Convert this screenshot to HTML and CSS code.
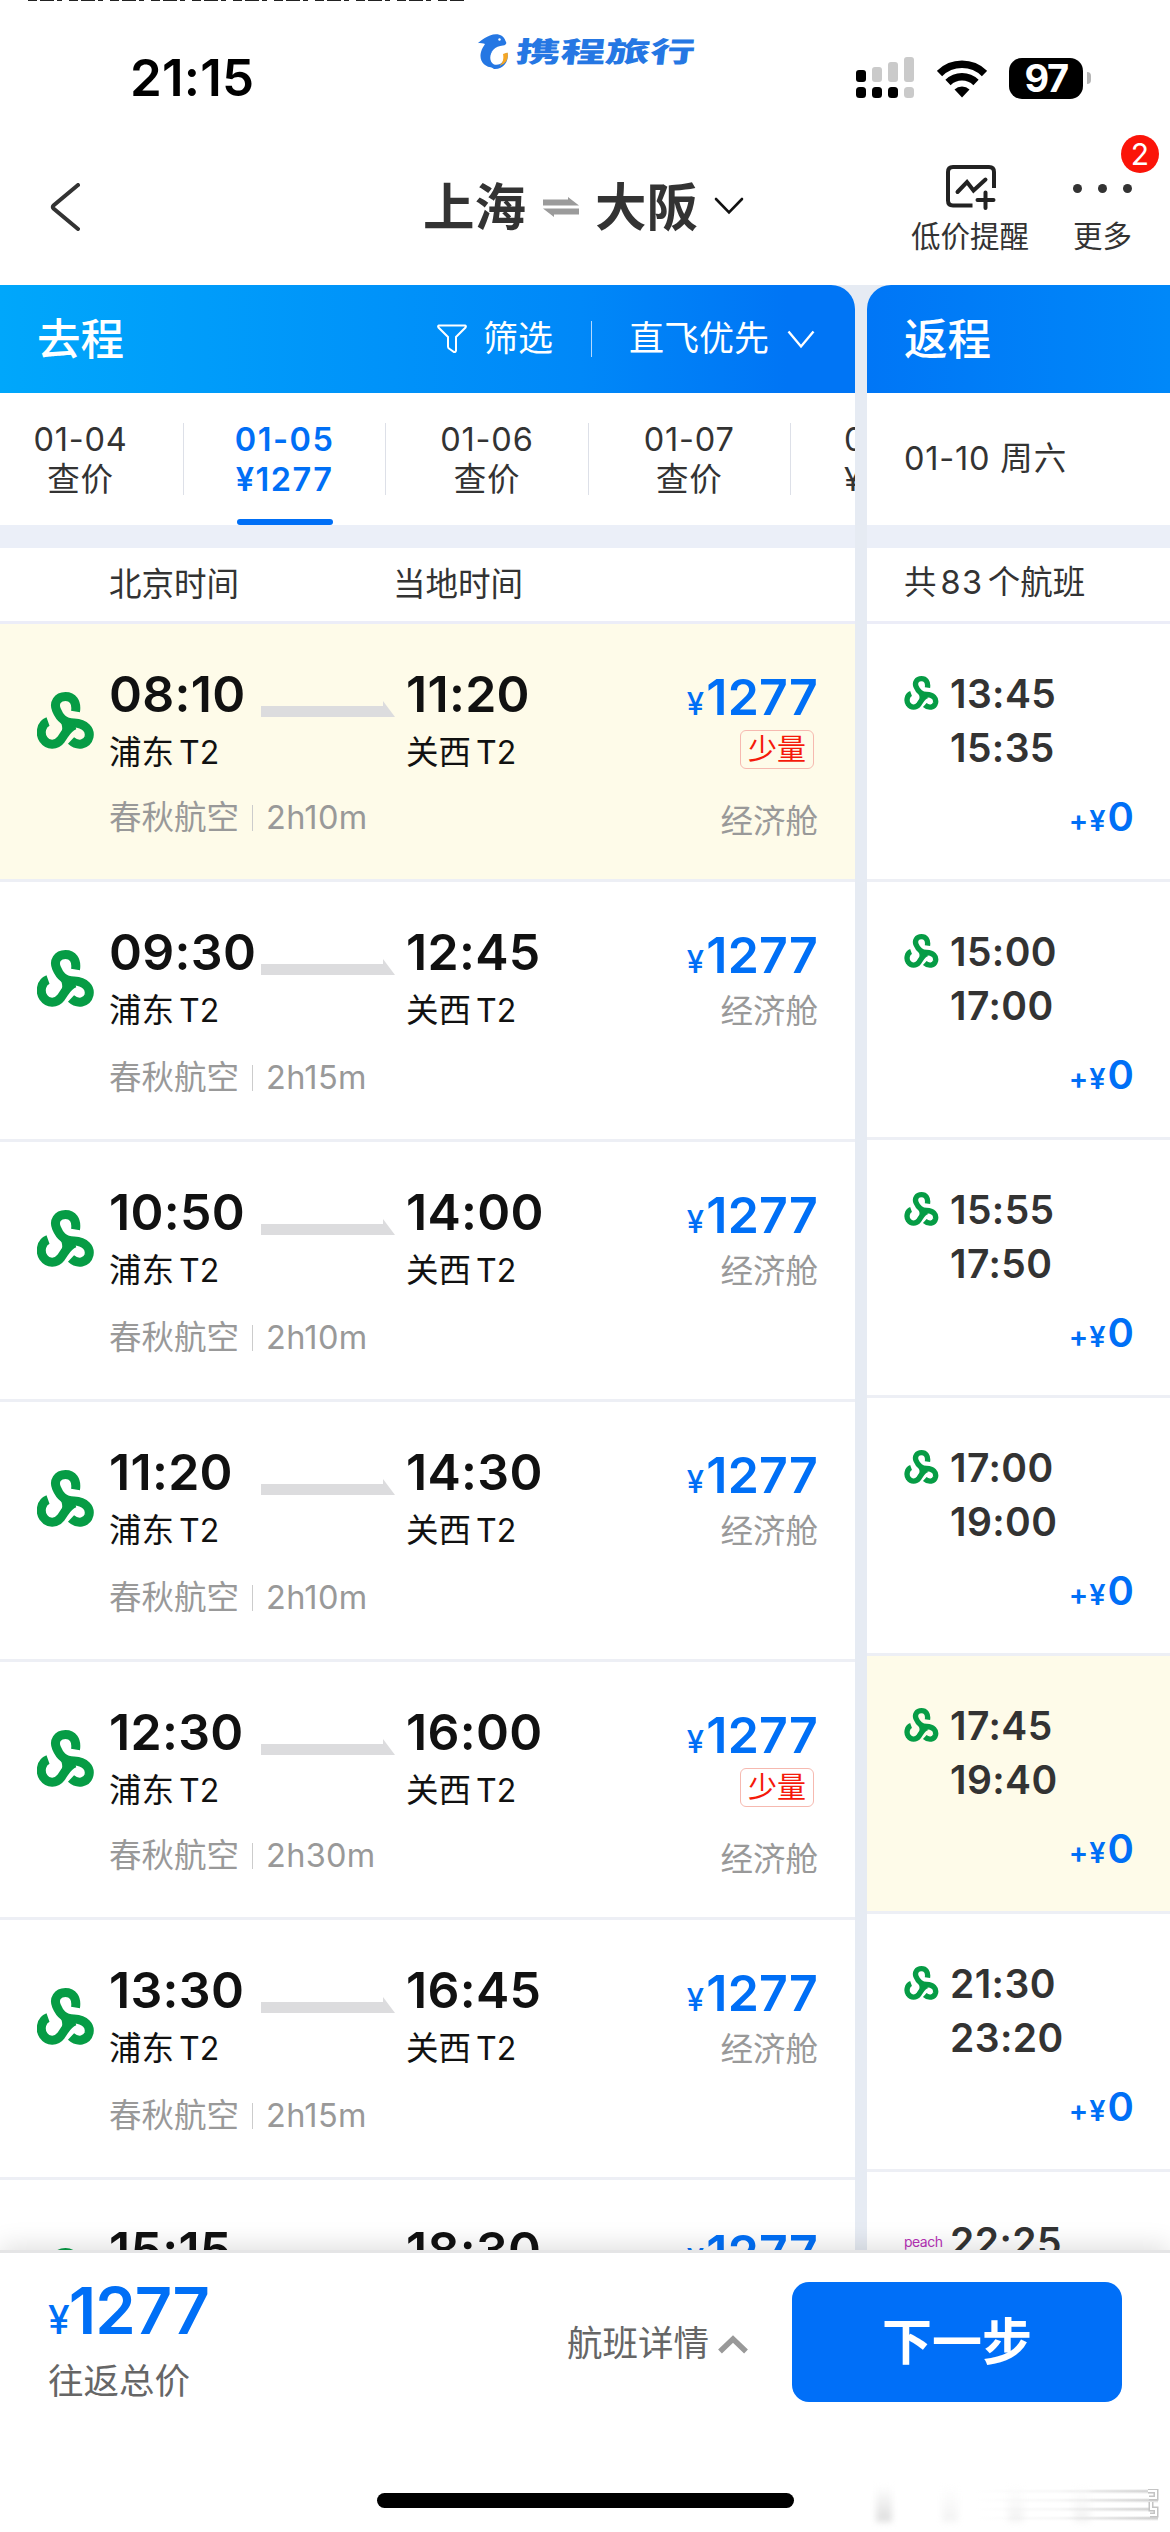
FILE: index.html
```html
<!DOCTYPE html>
<html lang="zh-CN">
<head>
<meta charset="utf-8">
<title>上海 - 大阪 航班</title>
<link rel="stylesheet" href="styles.css">
</head>
<body>
<svg class="defs" width="0" height="0">
  <symbol id="spring" viewBox="0 0 57 57">
    <g fill="none" stroke="#069c45" stroke-width="9">
      <path d="M38.500 19.500C40 10 35.500 4.500 28.500 4.500C20.500 4.500 16.500 11 19.500 18C22 24 26 31 37 31C48.500 31.500 53.500 38 52 45C50 53 40.500 54.500 34 48.500"/>
      <path d="M11 29.500C4 32 2.500 42 6.500 47.500C11 54 19.500 53.500 24 47.500C29 40.500 31 35 38 33"/>
    </g>
    <path d="M18 20L24 23L38 30L32 39L24.500 42C26 37 25.500 32 21.500 25Z" fill="#069c45"/>
  </symbol>
  <symbol id="arrow" viewBox="0 0 134 16">
    <path d="M0 5H122V0L134 16H0Z" fill="#dcdcde"/>
  </symbol>
</svg>
<div class="screen">
  <div class="sliver"></div>
  <header class="status">
    <div class="clock">21:15</div>
    <div class="brand">
      <svg width="32" height="36" viewBox="0 0 32 36">
        <path d="M1 9C6 5 9 3 13 1.500C20-1.500 27 1 28.500 7C30 9 29.500 11 26 11.500C22 12 19 13 16 16C11 21 11 29 18 33.500C8 34.500 1.500 27 4 18C5 14 7 12 8 10C6 9 4 9.500 1 9Z" fill="#2577e3"/>
        <path d="M17 15C12 20 12 28 17 30.500C24 32 28 27 27.500 20L30.500 19C32 28 26 35.500 17 35C9 31 9 21 17 15Z" fill="#2577e3"/>
        <path d="M26 20L30.500 18.500C32 25 29 30 22 32C26 29 27 25 26 20Z" fill="#f5a623"/>
        <circle cx="22.500" cy="5.500" r="1.200" fill="#fff"/>
      </svg>
      <div class="brand-box"><span class="brand-name">携程旅行</span></div>
    </div>
    <div class="indicators">
      <svg width="59" height="42" viewBox="0 0 59 42">
        <g fill="#000"><rect y="13" width="10" height="12" rx="3"/><rect y="30" width="10" height="11" rx="3.500"/><rect x="16" y="30" width="10" height="11" rx="3.500"/><rect x="32" y="30" width="10" height="11" rx="3.500"/></g>
        <g fill="#cacaca"><rect x="16" y="10" width="10" height="15" rx="3"/><rect x="32" y="5" width="10" height="20" rx="3"/><rect x="48" width="10" height="25" rx="3"/><rect x="48" y="30" width="10" height="11" rx="3.500"/></g>
      </svg>
      <svg width="50" height="38" viewBox="0 0 50 38">
        <g fill="none" stroke="#000" stroke-width="7.500"><path d="M2.500 13.500A32 32 0 0 1 47.500 13.500"/><path d="M11 22.500A20 20 0 0 1 39 22.500"/></g>
        <path d="M17.500 29.500A11 11 0 0 1 32.500 29.500L25 37.500Z"/>
      </svg>
      <div class="battery"><span class="level">97</span><span class="nub"></span></div>
    </div>
  </header>

  <nav class="nav">
    <svg class="back" width="30" height="48" viewBox="0 0 30 48"><path d="M28 2L3.500 22.500Q2 24 3.500 25.500L28 46" fill="none" stroke="#333" stroke-width="4" stroke-linecap="round"/></svg>
    <div class="route">
      <span>上海</span>
      <svg width="36" height="20" viewBox="0 0 36 20"><path d="M0 2.500H25V0L36 8.500H0Z M36 17.500H11V20L0 11.500H36Z" fill="#9b9b9b"/></svg>
      <span>大阪</span>
      <svg class="route-caret" width="30" height="18" viewBox="0 0 30 18"><path d="M2 2L15 15.500L28 2" fill="none" stroke="#111" stroke-width="2.600" stroke-linecap="round"/></svg>
    </div>
    <div class="tool tool-alert">
      <svg width="50" height="46" viewBox="0 0 50 46"><g fill="none" stroke="#222" stroke-width="4"><path d="M26.500 40.500H7Q2 40.500 2 35.500V7Q2 2 7 2H43Q48 2 48 7V23"/><path d="M11.500 27L21 17L27.500 25.500L39.500 14.500" stroke-linecap="round"/><path d="M31.500 35H47.500M39.500 27.500V43" stroke-linecap="round"/></g></svg>
      <span>低价提醒</span>
    </div>
    <div class="tool tool-more">
      <span class="dots"><i></i><i></i><i></i></span>
      <span>更多</span>
      <b class="badge">2</b>
    </div>
  </nav>

  <main class="columns">
    <section class="out">
      <div class="head head-out">
        <h2>去程</h2>
        <svg width="30" height="30" viewBox="0 0 30 30"><path d="M2 1.500H28Q29.500 2 28.500 3.500L19 13V26.500Q18.500 28.500 17 28L12 24.500Q11 24 11 22.500V13L1.500 3.500Q.5 2 2 1.500Z" fill="none" stroke="#fff" stroke-width="2"/></svg>
        <span class="filter">筛选</span>
        <i class="bar"></i>
        <span class="sort">直飞优先</span>
        <svg width="28" height="19" viewBox="0 0 28 19"><path d="M1.500 1.500L14 16.500L26.500 1.500" fill="none" stroke="#fff" stroke-width="2.400"/></svg>
      </div>
      <div class="dates">
        <div class="date"><span>01-04</span><span>查价</span></div>
        <div class="date active"><span>01-05</span><span>¥1277</span></div>
        <div class="date"><span>01-06</span><span>查价</span></div>
        <div class="date"><span>01-07</span><span>查价</span></div>
        <div class="date"><span>01-08</span><span>¥1277</span></div>
      </div>
      <div class="gap"></div>
      <div class="labels"><span class="label-dep">北京时间</span><span>当地时间</span></div>

      <article class="flight tagged selected">
        <svg class="logo"><use href="#spring"/></svg>
        <div class="leg"><b>08:10</b><span>浦东<em>T2</em></span></div>
        <svg class="arrow"><use href="#arrow"/></svg>
        <div class="leg"><b>11:20</b><span>关西<em>T2</em></span></div>
        <div class="fare"><span class="price"><small>¥</small>1277</span><span class="tag">少量</span><span class="cabin">经济舱</span></div>
        <div class="carrier"><span>春秋航空</span><i></i><span>2h10m</span></div>
      </article>
      <article class="flight">
        <svg class="logo"><use href="#spring"/></svg>
        <div class="leg"><b>09:30</b><span>浦东<em>T2</em></span></div>
        <svg class="arrow"><use href="#arrow"/></svg>
        <div class="leg"><b>12:45</b><span>关西<em>T2</em></span></div>
        <div class="fare"><span class="price"><small>¥</small>1277</span><span class="cabin">经济舱</span></div>
        <div class="carrier"><span>春秋航空</span><i></i><span>2h15m</span></div>
      </article>
      <article class="flight">
        <svg class="logo"><use href="#spring"/></svg>
        <div class="leg"><b>10:50</b><span>浦东<em>T2</em></span></div>
        <svg class="arrow"><use href="#arrow"/></svg>
        <div class="leg"><b>14:00</b><span>关西<em>T2</em></span></div>
        <div class="fare"><span class="price"><small>¥</small>1277</span><span class="cabin">经济舱</span></div>
        <div class="carrier"><span>春秋航空</span><i></i><span>2h10m</span></div>
      </article>
      <article class="flight">
        <svg class="logo"><use href="#spring"/></svg>
        <div class="leg"><b>11:20</b><span>浦东<em>T2</em></span></div>
        <svg class="arrow"><use href="#arrow"/></svg>
        <div class="leg"><b>14:30</b><span>关西<em>T2</em></span></div>
        <div class="fare"><span class="price"><small>¥</small>1277</span><span class="cabin">经济舱</span></div>
        <div class="carrier"><span>春秋航空</span><i></i><span>2h10m</span></div>
      </article>
      <article class="flight tagged">
        <svg class="logo"><use href="#spring"/></svg>
        <div class="leg"><b>12:30</b><span>浦东<em>T2</em></span></div>
        <svg class="arrow"><use href="#arrow"/></svg>
        <div class="leg"><b>16:00</b><span>关西<em>T2</em></span></div>
        <div class="fare"><span class="price"><small>¥</small>1277</span><span class="tag">少量</span><span class="cabin">经济舱</span></div>
        <div class="carrier"><span>春秋航空</span><i></i><span>2h30m</span></div>
      </article>
      <article class="flight">
        <svg class="logo"><use href="#spring"/></svg>
        <div class="leg"><b>13:30</b><span>浦东<em>T2</em></span></div>
        <svg class="arrow"><use href="#arrow"/></svg>
        <div class="leg"><b>16:45</b><span>关西<em>T2</em></span></div>
        <div class="fare"><span class="price"><small>¥</small>1277</span><span class="cabin">经济舱</span></div>
        <div class="carrier"><span>春秋航空</span><i></i><span>2h15m</span></div>
      </article>
      <article class="flight">
        <svg class="logo"><use href="#spring"/></svg>
        <div class="leg"><b>15:15</b></div>
        <svg class="arrow"></svg>
        <div class="leg"><b>18:30</b></div>
        <div class="fare"><span class="price"><small>¥</small>1277</span></div>
      </article>
    </section>

    <section class="back-col">
      <div class="head head-back"><h2>返程</h2></div>
      <div class="back-date">01-10 周六</div>
      <div class="gap"></div>
      <div class="labels back-count">共<span>83</span>个航班</div>
      <article class="ret"><svg class="mini"><use href="#spring"/></svg><div class="times"><b>13:45</b><b>15:35</b></div><div class="extra">+¥<b>0</b></div></article>
      <article class="ret"><svg class="mini"><use href="#spring"/></svg><div class="times"><b>15:00</b><b>17:00</b></div><div class="extra">+¥<b>0</b></div></article>
      <article class="ret"><svg class="mini"><use href="#spring"/></svg><div class="times"><b>15:55</b><b>17:50</b></div><div class="extra">+¥<b>0</b></div></article>
      <article class="ret"><svg class="mini"><use href="#spring"/></svg><div class="times"><b>17:00</b><b>19:00</b></div><div class="extra">+¥<b>0</b></div></article>
      <article class="ret selected"><svg class="mini"><use href="#spring"/></svg><div class="times"><b>17:45</b><b>19:40</b></div><div class="extra">+¥<b>0</b></div></article>
      <article class="ret"><svg class="mini"><use href="#spring"/></svg><div class="times"><b>21:30</b><b>23:20</b></div><div class="extra">+¥<b>0</b></div></article>
      <article class="ret"><span class="peach">peach</span><div class="times"><b>22:25</b></div></article>
    </section>
  </main>

  <footer class="footer">
    <div class="checkout">
      <div class="total"><span class="sum"><small>¥</small>1277</span><span class="sum-label">往返总价</span></div>
      <div class="detail">航班详情<svg width="30" height="19" viewBox="0 0 30 19"><path d="M2 16.500L15 4L28 16.500" fill="none" stroke="#999" stroke-width="5.500"/></svg></div>
      <div class="next">下一步</div>
    </div>
    <div class="home"></div>
    <div class="smear"><i></i><i></i><i></i><i></i><svg width="12" height="30" viewBox="0 0 12 30"><path d="M0 2H8V9H1M3 13V20H8V26H2" fill="none" stroke="#c4c4c4" stroke-width="5"/><path d="M0 2H8V9H1M3 13V20H8V26H2" fill="none" stroke="#fff" stroke-width="2"/></svg></div>
  </footer>
</div>
</body>
</html>
```
FILE: styles.css
```css
* { box-sizing: border-box; }
body { margin: 0; background: #fff; color: #333; font-family: Inter, "Noto Sans CJK SC", sans-serif; }
h2, b, em, i { margin: 0; font-style: normal; font-weight: inherit; }
svg { display: block; flex: none; }
.defs { position: absolute; }
.screen { width: 1170px; height: 2532px; display: flex; flex-direction: column; overflow: hidden; }

.sliver { flex: none; width: 438px; height: 1px; margin-left: 28px; background: repeating-linear-gradient(90deg, #222 0 9px, #fff 9px 12px, #222 12px 26px, #fff 26px 29px, #222 29px 34px, #fff 34px 41px); }

.status { flex: none; height: 130px; display: flex; align-items: flex-start; }
.clock { width: 347px; margin: 47px 0 0 130px; font-size: 51px; line-height: 60px; font-weight: 600; color: #000; letter-spacing: .2px; white-space: nowrap; }
.brand { width: 379px; margin-top: 33px; display: flex; align-items: center; gap: 7px; }
.brand-box { width: 178px; height: 36px; }
.brand-name { display: block; width: 112px; font-size: 28px; line-height: 37px; font-weight: 900; color: #2577e3; transform: scaleX(1.6) skewX(-4deg); transform-origin: 0 50%; }
.indicators { display: flex; margin-top: 56px; }
.indicators svg + svg { margin: 3px 0 0 22px; }
.battery { display: flex; align-items: center; gap: 4px; margin-left: 22px; }
.level { width: 74px; height: 41px; border-radius: 13px; background: #000; color: #fff; font-size: 38px; line-height: 41px; font-weight: 700; text-align: center; letter-spacing: -1.500px; }
.nub { width: 4px; height: 12px; border-radius: 0 5px 5px 0; background: #b5b5b5; }

.nav { flex: none; height: 154px; display: flex; align-items: flex-start; }
.back { margin: 52px 0 0 50px; }
.route { width: 488px; margin: 40px 0 0 343px; display: flex; align-items: center; font-size: 51.500px; line-height: 72px; font-weight: 600; }
.route svg { margin: 0 16px 0 17px; }
.route .route-caret { margin: -3px 0 0 16px; }
.tool { display: flex; flex-direction: column; align-items: center; font-size: 29.500px; line-height: 36px; position: relative; }
.tool-alert { width: 118px; margin-top: 34px; }
.tool-alert svg { margin-bottom: 7px; margin-left: 2px; }
.tool-alert span, .tool-more span { white-space: nowrap; }
.tool-more { margin: 53px 0 0 44px; }
.dots { height: 10px; display: flex; gap: 16px; margin-bottom: 24px; }
.dots i { width: 9px; height: 9px; border-radius: 50%; background: #333; }
.badge { position: absolute; left: 48px; top: -49px; width: 38px; height: 38px; border-radius: 50%; background: #fb1409; color: #fff; font-size: 30px; line-height: 38px; text-align: center; }

.columns { flex: 1; min-height: 0; display: flex; gap: 12px; overflow: hidden; background: #e6ebf3; }
.out { width: 855px; flex: none; overflow: hidden; }
.back-col { flex: 1; }
.head { height: 108px; display: flex; align-items: center; color: #fff; font-size: 35px; line-height: 42px; }
.head h2 { font-size: 43.500px; font-weight: 500; line-height: 60px; }
.head-out { padding-left: 37px; background: linear-gradient(90deg, #00a7fb, #0088f8 68%, #0075f5 92%); border-radius: 0 24px 0 0; }
.head-out h2 { width: 400px; }
.filter { margin: -2px 0 0 16px; }
.bar { width: 1px; height: 36px; margin: 0 37px 0 38px; background: #b5d9fd; }
.sort { margin: -2px 18px 0 0; }
.head-back { padding-left: 37px; background: linear-gradient(90deg, #0076f6, #0088f9); border-radius: 24px 0 0 0; }
.dates { height: 132px; padding-top: 30px; display: flex; background: #fff; }
.date { flex: none; width: 202.300px; height: 72px; display: flex; flex-direction: column; align-items: center; border-right: 1px solid #dde0e8; font-size: 32.500px; line-height: 40px; letter-spacing: .8px; }
.date:first-child { width: 184px; padding-right: 22px; }
.date span:first-child { margin-top: -3px; }
.date:last-child { align-items: flex-start; padding-left: 53px; }
.date.active { color: #006ff6; font-weight: 600; letter-spacing: 1.500px; }
.active::after { content: ""; flex: none; width: 96px; height: 6px; margin-top: 19px; border-radius: 3px; background: #006ff6; }
.gap { height: 23px; background: #ebeff8; }
.labels { height: 76px; display: flex; align-items: center; border-bottom: 3px solid #ecedf8; background: #fff; padding: 0 0 0 109px; font-size: 32.500px; line-height: 40px; }
.label-dep { width: 284px; }
.back-date { height: 132px; padding-left: 37px; line-height: 132px; font-size: 32.500px; background: #fff; letter-spacing: .8px; }
.back-count { padding: 0 0 3px 37px; }
.back-count span { margin: 0 4px; letter-spacing: 1.500px; }

.flight { height: 260px; padding: 45px 37px 0 109px; display: grid; grid-template-columns: 152px 145px 1fr auto; grid-template-rows: 129px auto; border-bottom: 3px solid #edeff5; background: #fff; }
.tagged { height: 258px; }
.flight.selected, .ret.selected { background: #fefbe9; }
.logo { width: 57px; height: 57px; grid-column: 1; grid-row: 1; margin: 23px 0 0 -72px; }
.leg { display: flex; flex-direction: column; grid-row: 1; color: #111; white-space: nowrap; }
.logo + .leg { grid-column: 1; }
.leg b { font-size: 50px; line-height: 50px; font-weight: 600; letter-spacing: .3px; }
.leg span { margin-top: 14px; font-size: 32.500px; line-height: 40px; }
.leg em { margin-left: 5px; font-size: 32px; }
.arrow { width: 134px; height: 16px; grid-column: 2; grid-row: 1; margin-top: 32px; }
.fare { grid-column: 4; grid-row: 1 / 3; display: flex; flex-direction: column; align-items: flex-end; }
.price { height: 54px; color: #006ff6; font-size: 50px; line-height: 56px; font-weight: 600; white-space: nowrap; letter-spacing: .2px; }
.price small { font-size: 31px; font-weight: 500; margin-right: 2px; }
.cabin { margin-top: 11px; font-size: 32.500px; line-height: 40px; color: #999; }
.tag { width: 74px; height: 39px; margin: 7px 4px 0 0; border: 1px solid #f6b9b0; border-radius: 6px; text-align: center; font-size: 29px; line-height: 37px; color: #f5190a; }
.tagged .cabin { margin-top: 33px; }
.carrier { grid-column: 1 / 4; grid-row: 2; height: 40px; display: flex; align-items: center; font-size: 32.500px; line-height: 40px; color: #999; }
.flight:not(.tagged) .carrier { margin-top: 2px; }
.carrier i { width: 1px; height: 26px; margin: 0 13px 0 13px; background: #ccc; }
.carrier span:last-child { letter-spacing: .3px; }

.ret { height: 258px; padding: 48px 36px 0 37px; display: grid; grid-template-columns: 46px 1fr; grid-template-rows: 108px auto; border-bottom: 3px solid #edeff5; background: #fff; }
.mini { width: 35px; height: 34px; margin-top: 4px; }
.times { display: flex; flex-direction: column; font-size: 39px; line-height: 43px; gap: 11px; font-weight: 600; letter-spacing: .4px; }
.extra { grid-column: 1 / 3; text-align: right; color: #006ff6; font-size: 29px; line-height: 73px; font-weight: 600; letter-spacing: 1px; }
.extra b { font-size: 40px; margin-left: 1px; letter-spacing: 0; }
.peach { font-size: 14px; color: #b833b8; margin-top: 13px; letter-spacing: -.5px; }

.footer { flex: none; height: 282px; border-top: 3px solid #e5e5e6; background: #fff; position: relative; box-shadow: 0 -4px 24px rgba(0, 0, 0, .13); }
.checkout { display: flex; height: 240px; align-items: flex-start; }
.total { width: 567px; padding: 27px 0 0 48px; display: flex; flex-direction: column; }
.sum { height: 60px; font-size: 65px; line-height: 61px; font-weight: 600; color: #006ff6; white-space: nowrap; letter-spacing: -1px; }
.sum small { font-size: 39px; font-weight: 500; }
.sum-label { margin-top: 22px; font-size: 35.500px; line-height: 40px; color: #666; }
.detail { width: 225px; margin-top: 71px; display: flex; align-items: center; font-size: 35.500px; line-height: 40px; color: #666; white-space: nowrap; }
.detail svg { margin-left: 9px; }
.next { margin-top: 29px; width: 330px; height: 120px; border-radius: 17px; background: #006ff8; color: #fff; font-size: 50px; line-height: 121px; font-weight: 600; text-align: center; }
.home { width: 417px; height: 15px; margin-left: 377px; border-radius: 8px; background: #000; }
.smear { position: absolute; left: 876px; top: 232px; width: 282px; height: 38px; display: flex; align-items: center; background: linear-gradient(90deg, rgba(255, 255, 255, 1) 35%, rgba(255, 255, 255, .85) 65%, rgba(255, 255, 255, 0)), repeating-linear-gradient(180deg, #fff 0 4px, #c8c8c8 6px, #fff 9px); }
.smear i { width: 16px; height: 36px; margin-right: 50px; background: linear-gradient(180deg, #fff, #ddd); filter: blur(3px); }
.smear i + i { opacity: .35; }
.smear svg { position: absolute; right: -2px; top: 4px; }
```
